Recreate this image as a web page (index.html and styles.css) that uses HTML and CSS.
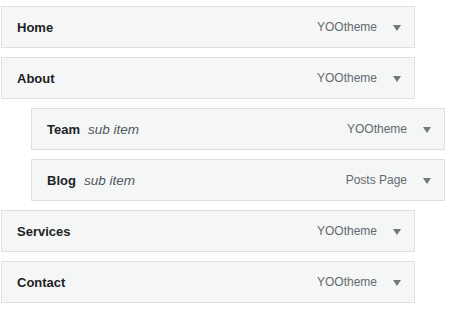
FILE: index.html
```html
<!DOCTYPE html>
<html>
<head>
<meta charset="utf-8">
<link rel="stylesheet" href="styles.css">
</head>
<body>
<ul class="menu">
  <li class="item"><div class="handle"><span class="title">Home</span><span class="controls"><span class="type">YOOtheme</span><span class="arrow"></span></span></div></li>
  <li class="item"><div class="handle"><span class="title">About</span><span class="controls"><span class="type">YOOtheme</span><span class="arrow"></span></span></div></li>
  <li class="item sub"><div class="handle"><span class="title">Team<span class="is-sub">sub item</span></span><span class="controls"><span class="type">YOOtheme</span><span class="arrow"></span></span></div></li>
  <li class="item sub"><div class="handle"><span class="title">Blog<span class="is-sub">sub item</span></span><span class="controls"><span class="type">Posts Page</span><span class="arrow"></span></span></div></li>
  <li class="item"><div class="handle"><span class="title">Services</span><span class="controls"><span class="type">YOOtheme</span><span class="arrow"></span></span></div></li>
  <li class="item"><div class="handle"><span class="title">Contact</span><span class="controls"><span class="type">YOOtheme</span><span class="arrow"></span></span></div></li>
</ul>
</body>
</html>
```
FILE: styles.css
```css
html, body {
  margin: 0;
  padding: 0;
  background: #ffffff;
}
body {
  font-family: "Liberation Sans", Arial, sans-serif;
  font-size: 13px;
  color: #1d2327;
}
.menu {
  list-style: none;
  margin: 0;
  padding: 6px 0 0 1px;
  display: flex;
  flex-direction: column;
  gap: 9px;
}
.item.sub {
  padding-left: 30px;
}
.handle {
  box-sizing: border-box;
  width: 414px;
  height: 42px;
  border: 1px solid #dfe1e1;
  background: #f5f6f6;
  display: flex;
  align-items: center;
  justify-content: space-between;
  padding: 0 13px 0 15px;
}
.title {
  font-weight: 700;
  color: #1d2327;
}
.is-sub {
  font-weight: 400;
  font-style: italic;
  color: #50575e;
  margin-left: 8px;
  font-size: 13.5px;
}
.controls {
  display: flex;
  align-items: center;
}
.type {
  font-size: 12px;
  color: #646970;
}
.arrow {
  width: 0;
  height: 0;
  border-left: 4px solid transparent;
  border-right: 4px solid transparent;
  border-top: 6px solid #72777c;
  margin-left: 16px;
  margin-top: 1px;
}
```
